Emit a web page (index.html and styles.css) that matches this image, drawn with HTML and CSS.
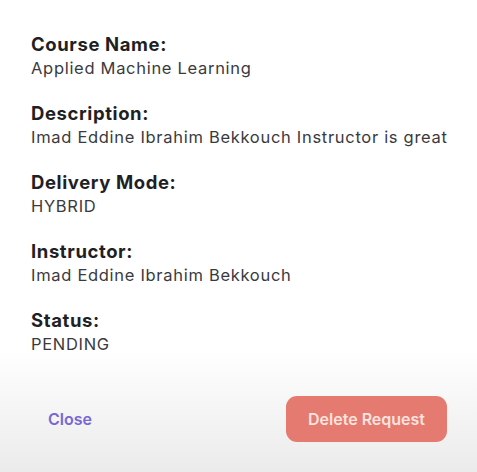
FILE: index.html
```html
<!DOCTYPE html>
<html>
<head>
<meta charset="utf-8">
<link rel="stylesheet" href="styles.css">
</head>
<body>
<div class="modal">
  <div class="fields">
    <div class="field">
      <div class="label">Course Name:</div>
      <div class="value">Applied Machine Learning</div>
    </div>
    <div class="field">
      <div class="label">Description:</div>
      <div class="value">Imad Eddine Ibrahim Bekkouch Instructor is great</div>
    </div>
    <div class="field">
      <div class="label">Delivery Mode:</div>
      <div class="value">HYBRID</div>
    </div>
    <div class="field">
      <div class="label">Instructor:</div>
      <div class="value">Imad Eddine Ibrahim Bekkouch</div>
    </div>
    <div class="field">
      <div class="label">Status:</div>
      <div class="value">PENDING</div>
    </div>
  </div>
  <div class="actions">
    <button class="btn-close">Close</button>
    <button class="btn-delete">Delete Request</button>
  </div>
</div>
</body>
</html>
```

FILE: styles.css
```css
html, body {
  margin: 0;
  padding: 0;
  height: 100%;
}
body {
  background: linear-gradient(to bottom, #ffffff 0px, #ffffff 350px, #ebebeb 472px);
  font-family: Inter, "Liberation Sans", sans-serif;
  color: #2b2b30;
}
.modal {
  padding: 32px 30px 0 31px;
}
.fields {
  display: flex;
  flex-direction: column;
  gap: 21px;
}
.field {
  display: flex;
  flex-direction: column;
}
.label {
  font-size: 18.5px;
  font-weight: 700;
  line-height: 24px;
  letter-spacing: 0.6px;
  color: #1f1f24;
}
.value {
  font-size: 16.5px;
  line-height: 24px;
  letter-spacing: 0.7px;
  color: #3a3a40;
  white-space: nowrap;
}
.actions {
  display: flex;
  justify-content: space-between;
  align-items: center;
  margin-top: 40px;
}
.btn-close {
  border: none;
  background: none;
  font-family: inherit;
  font-size: 16px;
  font-weight: 600;
  color: #7868d4;
  padding: 0 0 0 17px;
  cursor: pointer;
}
.btn-delete {
  border: none;
  background: #e57a71;
  color: #fbe3de;
  font-family: inherit;
  font-size: 16px;
  font-weight: 600;
  width: 161px;
  height: 46px;
  border-radius: 11px;
  cursor: pointer;
}
```
